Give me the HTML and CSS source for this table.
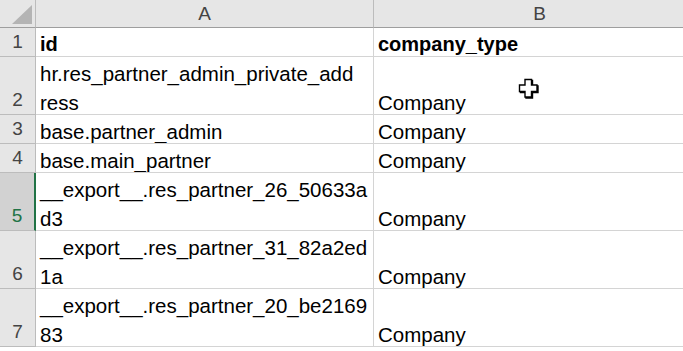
FILE: index.html
```html
<!DOCTYPE html>
<html>
<head>
<meta charset="utf-8">
<link rel="stylesheet" href="styles.css">
</head>
<body>
<div class="sheet">
  <div class="corner"><span class="tri"></span></div>
  <div class="colhead">A</div>
  <div class="colhead">B</div>

  <div class="rowhead">1</div>
  <div class="cell"><span class="txt bold">id</span></div>
  <div class="cell"><span class="txt bold">company_type</span></div>

  <div class="rowhead">2</div>
  <div class="cell"><span class="txt">hr.res_partner_admin_private_add<br>ress</span></div>
  <div class="cell"><span class="txt">Company</span></div>

  <div class="rowhead">3</div>
  <div class="cell"><span class="txt">base.partner_admin</span></div>
  <div class="cell"><span class="txt">Company</span></div>

  <div class="rowhead">4</div>
  <div class="cell"><span class="txt">base.main_partner</span></div>
  <div class="cell"><span class="txt">Company</span></div>

  <div class="rowhead active">5</div>
  <div class="cell"><span class="txt">__export__.res_partner_26_50633a<br>d3</span></div>
  <div class="cell"><span class="txt">Company</span></div>

  <div class="rowhead">6</div>
  <div class="cell"><span class="txt">__export__.res_partner_31_82a2ed<br>1a</span></div>
  <div class="cell"><span class="txt">Company</span></div>

  <div class="rowhead">7</div>
  <div class="cell"><span class="txt">__export__.res_partner_20_be2169<br>83</span></div>
  <div class="cell"><span class="txt">Company</span></div>
</div>
<svg class="cursor" width="22" height="22" viewBox="0 0 22 22">
  <path d="M8 2.5h6.5v5.5h5.5v6.5h-5.5v5.5h-6.5v-5.5h-5.5v-6.5h5.5z" fill="#000" stroke="#000" stroke-width="1.4"/>
  <path d="M7 1.5h6.5v5.5h5.5v6.5h-5.5v5.5h-6.5v-5.5h-5.5v-6.5h5.5z" fill="#fff" stroke="#000" stroke-width="1.4"/>
</svg>
</body>
</html>
```

FILE: styles.css
```css
html, body {
  margin: 0;
  padding: 0;
  background: #fff;
  overflow: hidden;
}
body {
  width: 683px;
  height: 351px;
  position: relative;
}
.sheet {
  display: grid;
  grid-template-columns: 36px 338px 332px;
  grid-template-rows: 28px 29px 58px 29px 29px 58px 58px 58px;
  font-family: "Liberation Sans", Arial, sans-serif;
  font-size: 20.5px;
  color: #000;
}
.corner {
  background: #e6e6e6;
  border-right: 1px solid #bcbcbc;
  border-bottom: 1px solid #9e9e9e;
  position: relative;
}
.tri {
  position: absolute;
  left: 12px;
  top: 5px;
  width: 20px;
  height: 19px;
  background: #b4b4b4;
  clip-path: polygon(100% 0, 100% 100%, 0 100%);
}
.colhead {
  background: #e6e6e6;
  border-right: 1px solid #bcbcbc;
  border-bottom: 1px solid #9e9e9e;
  display: flex;
  align-items: center;
  justify-content: center;
  color: #444;
  font-size: 19px;
}
.rowhead {
  background: #e6e6e6;
  border-right: 1px solid #bcbcbc;
  border-bottom: 1px solid #bcbcbc;
  display: flex;
  align-items: flex-end;
  justify-content: center;
  color: #444;
  font-size: 19px;
  line-height: 29px;
  overflow: hidden;
}
.rowhead.active {
  background: #d2d2d2;
  color: #217346;
  border-right: 2px solid #217346;
}
.cell {
  border-right: 1px solid #d4d4d4;
  border-bottom: 1px solid #d4d4d4;
  display: flex;
  align-items: flex-end;
  padding-left: 4px;
  overflow: hidden;
}
.txt {
  line-height: 29px;
  margin-bottom: -3px;
  white-space: nowrap;
}
.bold {
  font-weight: bold;
  font-size: 20px;
}
.cursor {
  position: absolute;
  left: 518px;
  top: 78px;
}
```
